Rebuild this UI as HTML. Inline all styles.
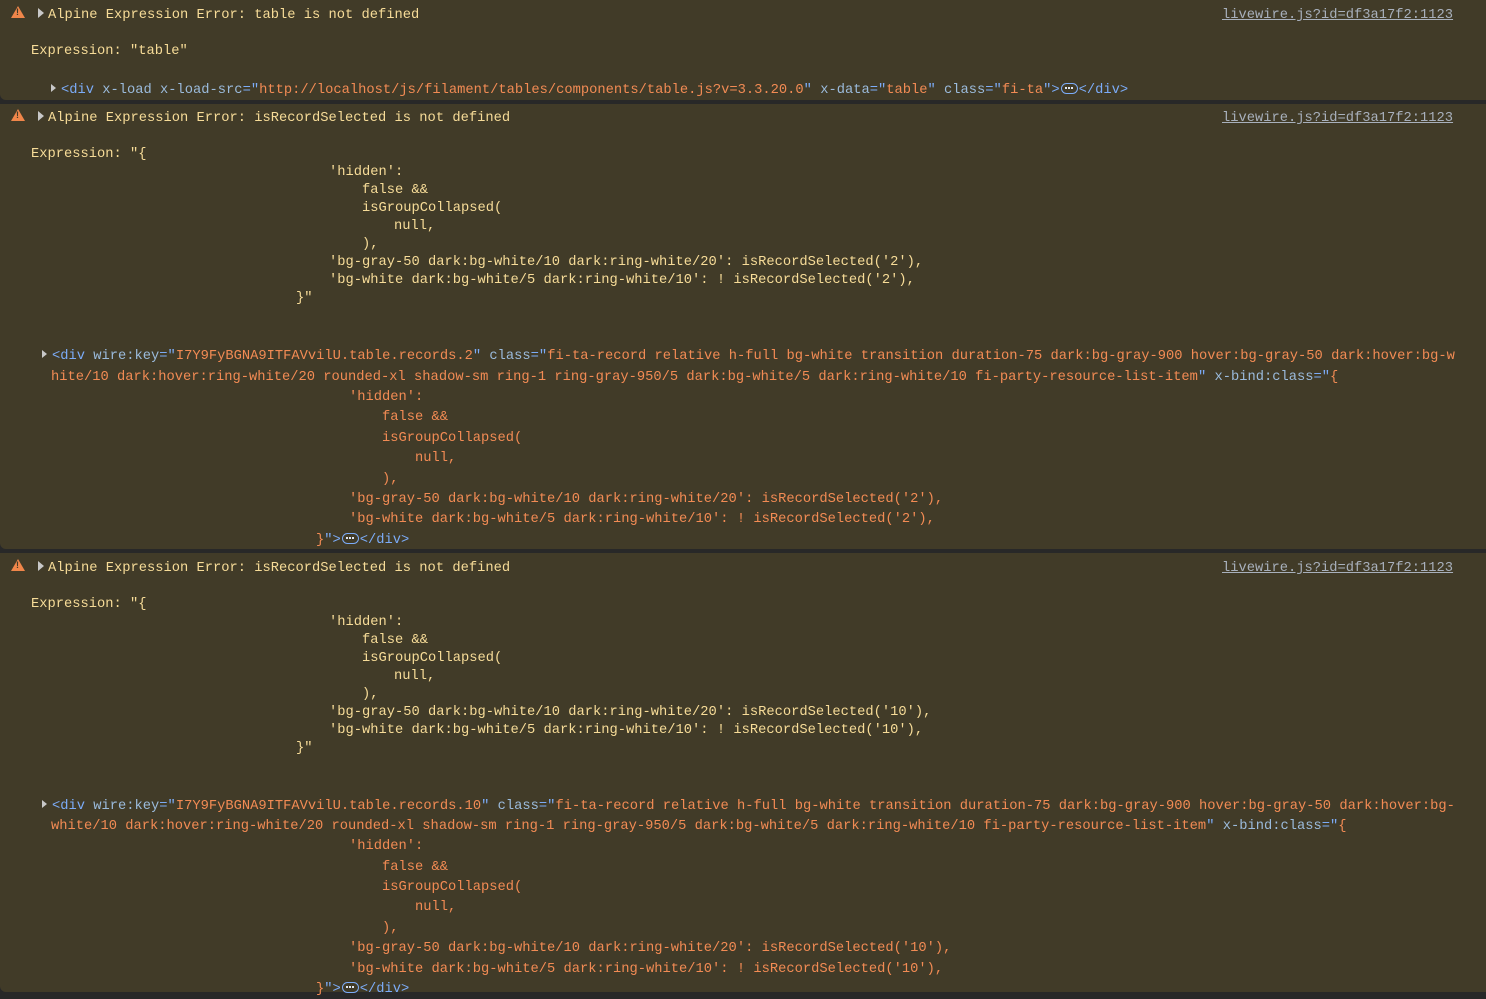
<!DOCTYPE html><html><head><meta charset="utf-8"><style>
body{margin:0;background:#282828;width:1486px;height:992px;overflow:hidden;font-family:"Liberation Mono",monospace;font-size:13.75px;}
.b{position:absolute;left:0;width:1486px;background:#413b28;border-radius:0 0 0 6px}
.l{position:absolute;white-space:pre;line-height:18px;color:#f7dc98;margin-top:3px}
.t{color:#7cacf8}.a{color:#9bbbdc}.v{color:#f28b54}.o{color:#f28b54}
.lk{position:absolute;left:1222px;color:#a8b0bc;text-decoration:underline;white-space:pre;line-height:18px;margin-top:3px}
.w{position:absolute;left:11px;width:0;height:0;border-left:7px solid transparent;border-right:7px solid transparent;border-bottom:12px solid #f0864a}
.w:after{content:"!";position:absolute;left:-2px;top:1px;font:bold 9px "Liberation Sans",sans-serif;color:#413b28}
.tr{position:absolute;width:0;height:0;border-top:5px solid transparent;border-bottom:5px solid transparent;border-left:6px solid #c8c8c8}
.e{display:inline-block;position:relative;width:17px;height:11px;border:1px solid #7cacf8;border-radius:6px;box-sizing:border-box;vertical-align:-1px;margin:0 1px}
.e:before{content:"";position:absolute;left:3px;top:3px;width:2px;height:2px;background:#dfe7f5;box-shadow:3px 0 #dfe7f5,6px 0 #dfe7f5}
</style></head><body>
<div class="b" style="top:0;height:100px"></div>
<div class="b" style="top:104px;height:445px"></div>
<div class="b" style="top:553px;height:439px"></div>

<div class="w" style="top:6px"></div><div class="tr" style="left:38px;top:8px"></div>
<div class="l" style="left:48px;top:4px">Alpine Expression Error: table is not defined</div>
<div class="lk" style="top:4px">livewire.js?id=df3a17f2:1123</div>
<div class="l" style="left:31px;top:40px">Expression: "table"</div>
<div class="tr" style="left:51px;top:84px;border-left-width:5px;border-top-width:4px;border-bottom-width:4px"></div>
<div class="l" style="left:61px;top:79px"><span class="t">&lt;div</span> <span class="a">x-load x-load-src</span><span class="t">="</span><span class="v">http://localhost/js/filament/tables/components/table.js?v=3.3.20.0</span><span class="t">"</span> <span class="a">x-data</span><span class="t">="</span><span class="v">table</span><span class="t">"</span> <span class="a">class</span><span class="t">="</span><span class="v">fi-ta</span><span class="t">"&gt;</span><span class="e"></span><span class="t">&lt;/div&gt;</span></div>

<div class="w" style="top:109px"></div><div class="tr" style="left:38px;top:111px"></div>
<div class="l" style="left:48px;top:107px">Alpine Expression Error: isRecordSelected is not defined</div>
<div class="lk" style="top:107px">livewire.js?id=df3a17f2:1123</div>
<div class="l" style="left:31px;top:143px">Expression: "{</div>
<div class="l" style="left:329px;top:161px">'hidden':</div>
<div class="l" style="left:362px;top:179px">false &amp;&amp;</div>
<div class="l" style="left:362px;top:197px">isGroupCollapsed(</div>
<div class="l" style="left:394px;top:215px">null,</div>
<div class="l" style="left:362px;top:233px">),</div>
<div class="l" style="left:329px;top:251px">'bg-gray-50 dark:bg-white/10 dark:ring-white/20': isRecordSelected('2'),</div>
<div class="l" style="left:329px;top:269px">'bg-white dark:bg-white/5 dark:ring-white/10': ! isRecordSelected('2'),</div>
<div class="l" style="left:296px;top:287px">}"</div>
<div class="tr" style="left:42px;top:350px;border-left-width:5px;border-top-width:4px;border-bottom-width:4px"></div>
<div class="l" style="left:52px;top:345px"><span class="t">&lt;div</span> <span class="a">wire:key</span><span class="t">="</span><span class="v">I7Y9FyBGNA9ITFAVvilU.table.records.2</span><span class="t">"</span> <span class="a">class</span><span class="t">="</span><span class="v">fi-ta-record relative h-full bg-white transition duration-75 dark:bg-gray-900 hover:bg-gray-50 dark:hover:bg-w</span></div>
<div class="l" style="left:51px;top:366px"><span class="v">hite/10 dark:hover:ring-white/20 rounded-xl shadow-sm ring-1 ring-gray-950/5 dark:bg-white/5 dark:ring-white/10 fi-party-resource-list-item</span><span class="t">"</span> <span class="a">x-bind:class</span><span class="t">="</span><span class="v">{</span></div>
<div class="l o" style="left:349px;top:386px">'hidden':</div>
<div class="l o" style="left:382px;top:406px">false &amp;&amp;</div>
<div class="l o" style="left:382px;top:427px">isGroupCollapsed(</div>
<div class="l o" style="left:415px;top:447px">null,</div>
<div class="l o" style="left:382px;top:468px">),</div>
<div class="l o" style="left:349px;top:488px">'bg-gray-50 dark:bg-white/10 dark:ring-white/20': isRecordSelected('2'),</div>
<div class="l o" style="left:349px;top:508px">'bg-white dark:bg-white/5 dark:ring-white/10': ! isRecordSelected('2'),</div>
<div class="l" style="left:316px;top:529px"><span class="v">}</span><span class="t">"&gt;</span><span class="e"></span><span class="t">&lt;/div&gt;</span></div>

<div class="w" style="top:559px"></div><div class="tr" style="left:38px;top:561px"></div>
<div class="l" style="left:48px;top:557px">Alpine Expression Error: isRecordSelected is not defined</div>
<div class="lk" style="top:557px">livewire.js?id=df3a17f2:1123</div>
<div class="l" style="left:31px;top:593px">Expression: "{</div>
<div class="l" style="left:329px;top:611px">'hidden':</div>
<div class="l" style="left:362px;top:629px">false &amp;&amp;</div>
<div class="l" style="left:362px;top:647px">isGroupCollapsed(</div>
<div class="l" style="left:394px;top:665px">null,</div>
<div class="l" style="left:362px;top:683px">),</div>
<div class="l" style="left:329px;top:701px">'bg-gray-50 dark:bg-white/10 dark:ring-white/20': isRecordSelected('10'),</div>
<div class="l" style="left:329px;top:719px">'bg-white dark:bg-white/5 dark:ring-white/10': ! isRecordSelected('10'),</div>
<div class="l" style="left:296px;top:737px">}"</div>
<div class="tr" style="left:42px;top:800px;border-left-width:5px;border-top-width:4px;border-bottom-width:4px"></div>
<div class="l" style="left:52px;top:795px"><span class="t">&lt;div</span> <span class="a">wire:key</span><span class="t">="</span><span class="v">I7Y9FyBGNA9ITFAVvilU.table.records.10</span><span class="t">"</span> <span class="a">class</span><span class="t">="</span><span class="v">fi-ta-record relative h-full bg-white transition duration-75 dark:bg-gray-900 hover:bg-gray-50 dark:hover:bg-</span></div>
<div class="l" style="left:51px;top:815px"><span class="v">white/10 dark:hover:ring-white/20 rounded-xl shadow-sm ring-1 ring-gray-950/5 dark:bg-white/5 dark:ring-white/10 fi-party-resource-list-item</span><span class="t">"</span> <span class="a">x-bind:class</span><span class="t">="</span><span class="v">{</span></div>
<div class="l o" style="left:349px;top:835px">'hidden':</div>
<div class="l o" style="left:382px;top:856px">false &amp;&amp;</div>
<div class="l o" style="left:382px;top:876px">isGroupCollapsed(</div>
<div class="l o" style="left:415px;top:896px">null,</div>
<div class="l o" style="left:382px;top:917px">),</div>
<div class="l o" style="left:349px;top:937px">'bg-gray-50 dark:bg-white/10 dark:ring-white/20': isRecordSelected('10'),</div>
<div class="l o" style="left:349px;top:958px">'bg-white dark:bg-white/5 dark:ring-white/10': ! isRecordSelected('10'),</div>
<div class="l" style="left:316px;top:978px"><span class="v">}</span><span class="t">"&gt;</span><span class="e"></span><span class="t">&lt;/div&gt;</span></div>
</body></html>
